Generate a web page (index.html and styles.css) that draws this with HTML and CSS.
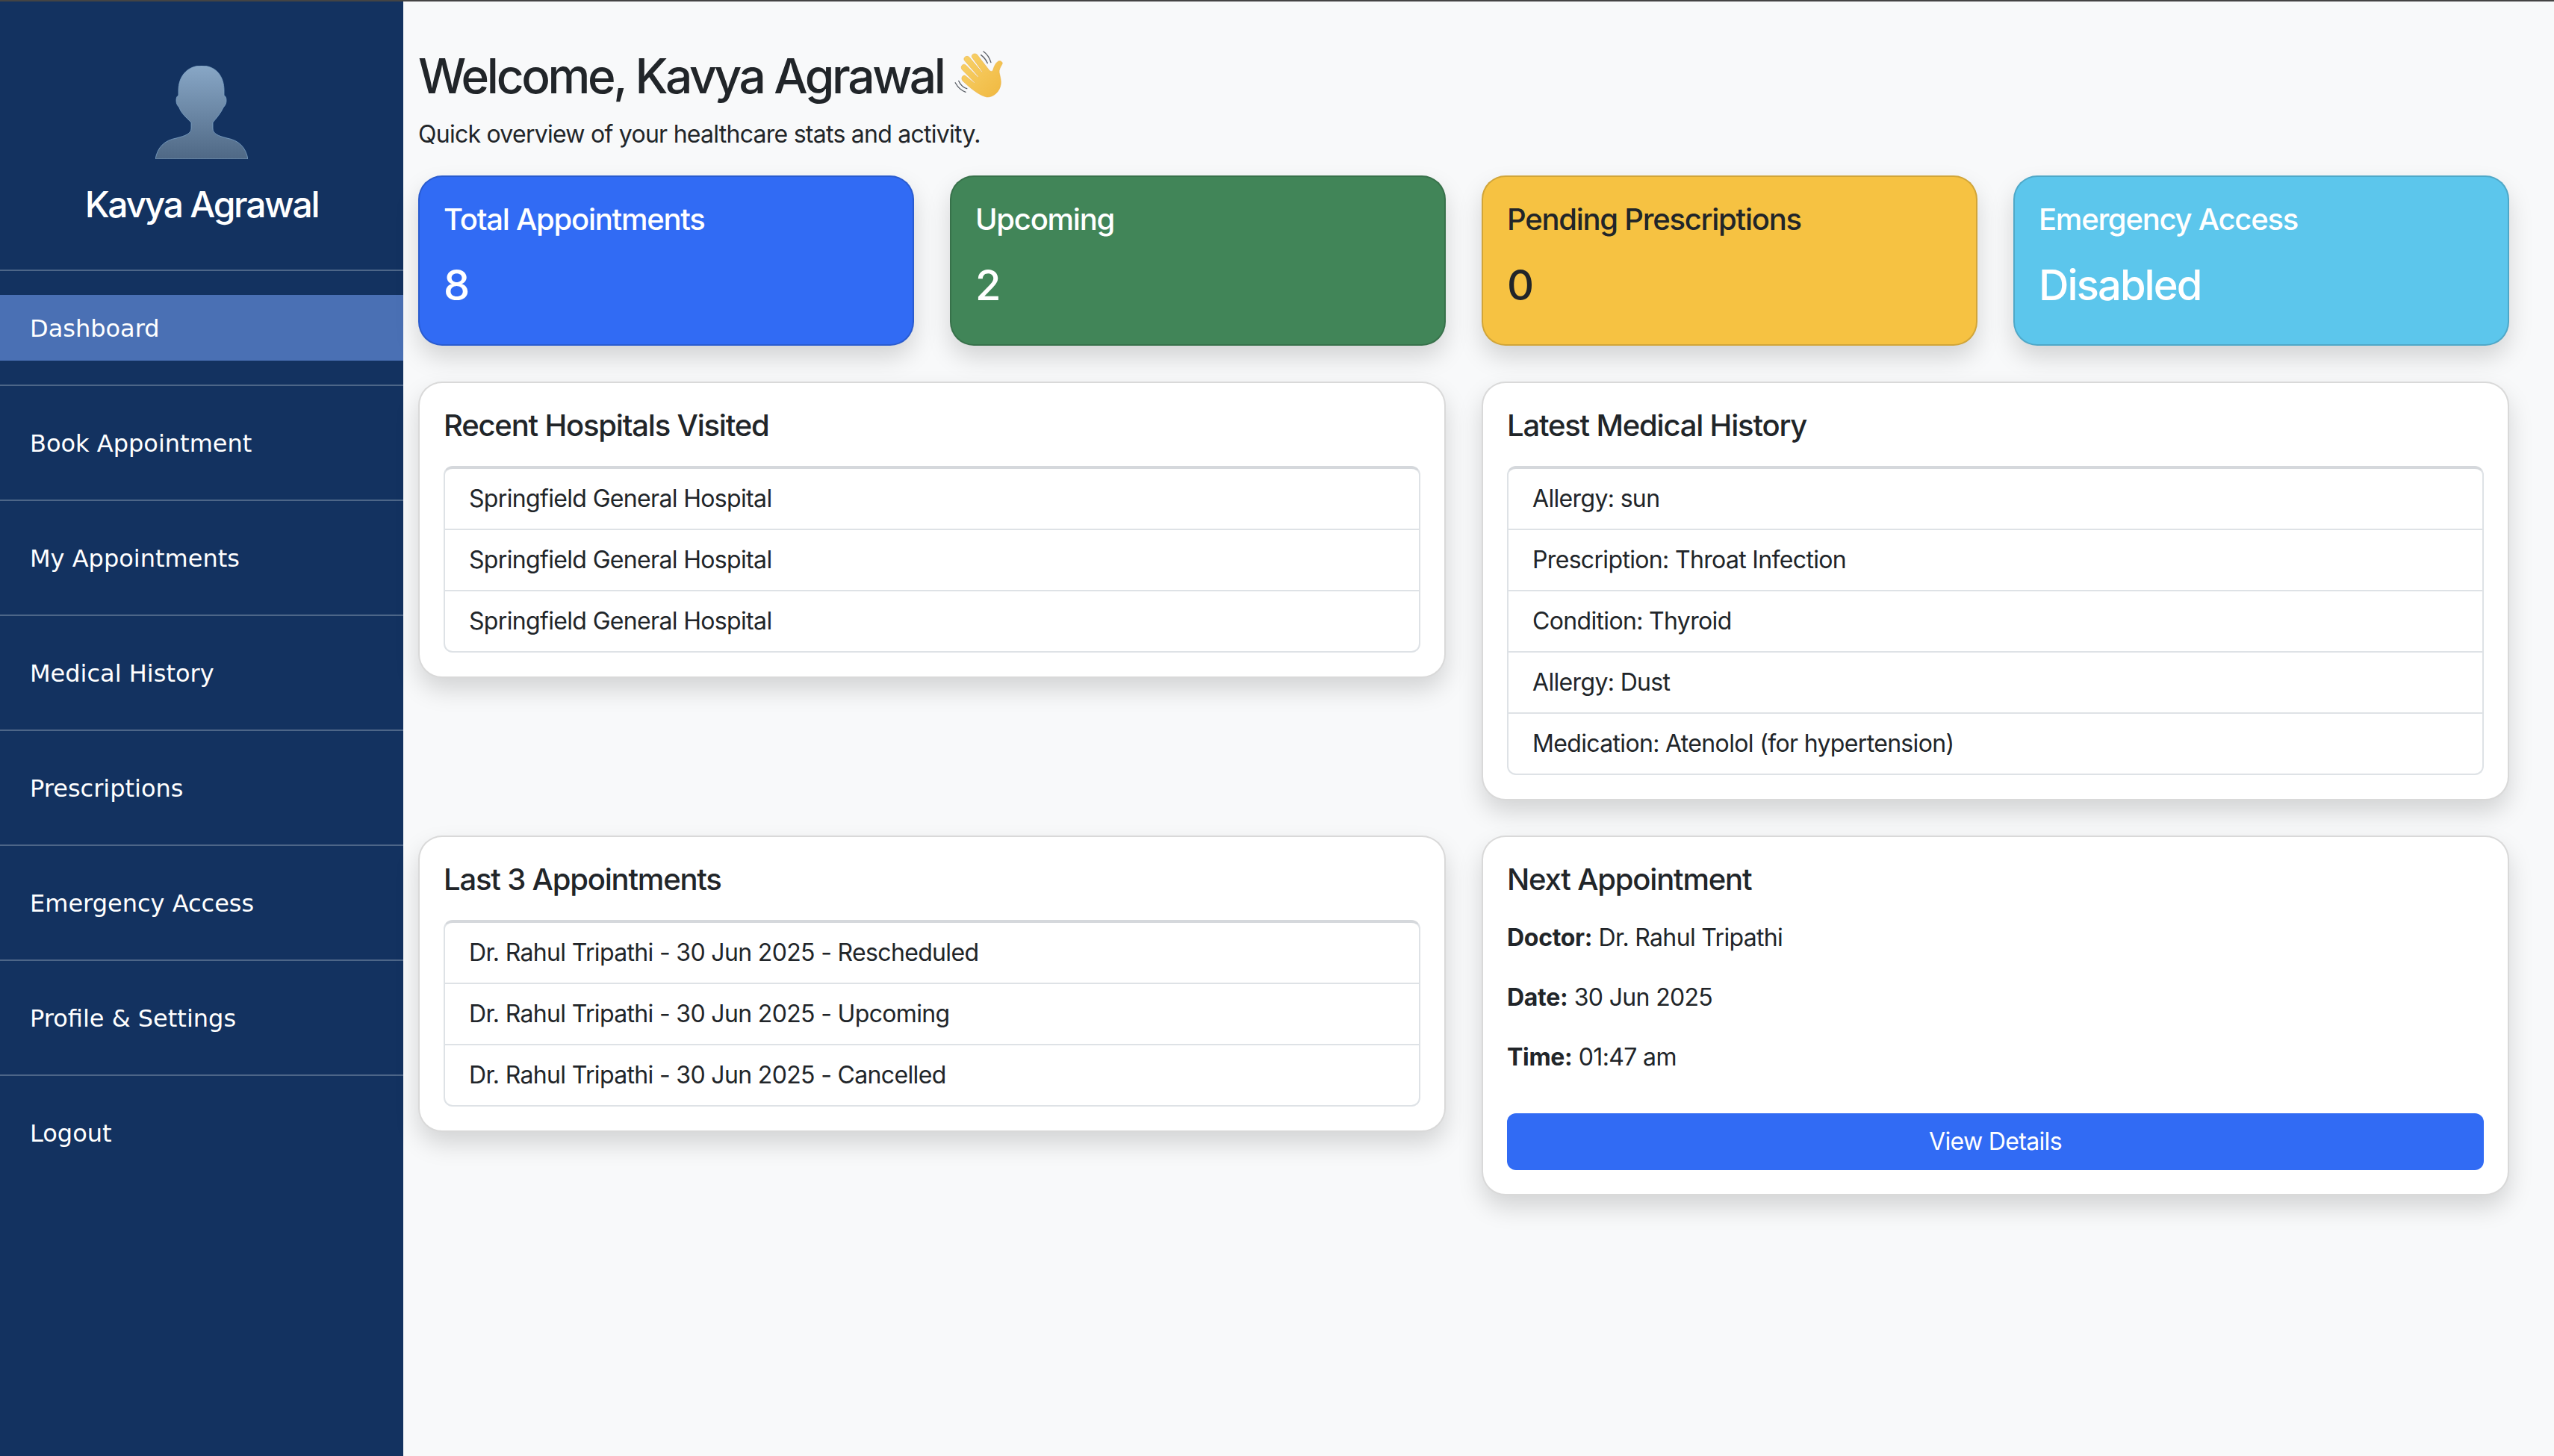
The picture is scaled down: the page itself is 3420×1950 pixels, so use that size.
FILE: index.html
```html
<!DOCTYPE html>
<html lang="en">
<head>
    <meta charset="UTF-8"/>
    <title>Patient Dashboard</title>
    <link rel="stylesheet" href="styles.css">
</head>
<body>
<div class="container">
    <div id="sidebar">
        <div class="profile">
            <svg class="avatar" viewBox="0 0 124 125">
                <defs>
                    <linearGradient id="bust" x1="0" y1="0" x2="0" y2="1">
                        <stop offset="0" stop-color="#88a7c6"/>
                        <stop offset="1" stop-color="#4f6885"/>
                    </linearGradient>
                </defs>
                <path fill="url(#bust)" stroke="#7fa5c8" stroke-width="0.8" d="M62 0C42 0 31 15 31 33V40C28 41 28 45 28 47C28 51 30 54 32 56C34 63 42 70 48 76V84C48 91 40 94 28 97C12 100 3 109 0 125H124C121 109 112 100 96 97C84 94 77 91 77 84V76C82 70 88 63 91 56C93 54 95 51 95 47C95 45 95 41 92 40V33C92 15 82 0 62 0Z"/>
            </svg>
            <h4 class="profile-name">Kavya Agrawal</h4>
        </div>
        <hr class="divider">
        <a class="nav-link active" href="#">Dashboard</a>
        <hr class="divider">
        <a class="nav-link" href="#">Book Appointment</a>
        <hr class="divider">
        <a class="nav-link" href="#">My Appointments</a>
        <hr class="divider">
        <a class="nav-link" href="#">Medical History</a>
        <hr class="divider">
        <a class="nav-link" href="#">Prescriptions</a>
        <hr class="divider">
        <a class="nav-link" href="#">Emergency Access</a>
        <hr class="divider">
        <a class="nav-link" href="#">Profile &amp; Settings</a>
        <hr class="divider">
        <a class="nav-link" href="#">Logout</a>
    </div>
    <div id="main">
        <h2 class="welcome">Welcome, Kavya Agrawal
            <svg class="wave" viewBox="55 83 195 190">
                <defs>
                    <linearGradient id="skin" x1="0" y1="0" x2="1" y2="1">
                        <stop offset="0" stop-color="#f8d26a"/>
                        <stop offset="1" stop-color="#f0b840"/>
                    </linearGradient>
                </defs>
                <path fill="url(#skin)" stroke="#e8ad3c" stroke-width="1.5" d="M185 270C160 265 130 242 110 225L88 205C80 195 86 180 98 183L136 214L137 212L86 160C76 148 88 132 100 140L150 190L152 188L95 122C88 110 104 100 114 108L166 170L168 168L126 110C120 98 136 90 146 98L194 160C198 166 206 168 210 162C214 150 218 134 232 125C242 122 250 128 248 136C240 150 234 160 236 172C240 190 244 205 242 218C238 250 210 272 185 270Z"/>
                <g fill="none" stroke="#5a5f66" stroke-width="4" stroke-linecap="round">
                    <path d="M172 86C185 95 197 113 202 130"/>
                    <path d="M162 100C172 108 183 120 188 133"/>
                    <path d="M58 212C68 230 85 245 100 250"/>
                    <path d="M72 205C80 222 92 232 105 236"/>
                </g>
            </svg>
        </h2>
        <p class="subtitle">Quick overview of your healthcare stats and activity.</p>

        <div class="stats-row">
            <div class="stat-card bg-blue">
                <h5>Total Appointments</h5>
                <h3>8</h3>
            </div>
            <div class="stat-card bg-green">
                <h5>Upcoming</h5>
                <h3>2</h3>
            </div>
            <div class="stat-card bg-yellow">
                <h5>Pending Prescriptions</h5>
                <h3>0</h3>
            </div>
            <div class="stat-card bg-cyan">
                <h5>Emergency Access</h5>
                <h3>Disabled</h3>
            </div>
        </div>

        <div class="panels">
            <div class="panel">
                <h5>Recent Hospitals Visited</h5>
                <ul class="list-group">
                    <li>Springfield General Hospital</li>
                    <li>Springfield General Hospital</li>
                    <li>Springfield General Hospital</li>
                </ul>
            </div>
            <div class="panel">
                <h5>Latest Medical History</h5>
                <ul class="list-group">
                    <li>Allergy: sun</li>
                    <li>Prescription: Throat Infection</li>
                    <li>Condition: Thyroid</li>
                    <li>Allergy: Dust</li>
                    <li>Medication: Atenolol (for hypertension)</li>
                </ul>
            </div>
            <div class="panel">
                <h5>Last 3 Appointments</h5>
                <ul class="list-group">
                    <li>Dr. Rahul Tripathi - 30 Jun 2025 - Rescheduled</li>
                    <li>Dr. Rahul Tripathi - 30 Jun 2025 - Upcoming</li>
                    <li>Dr. Rahul Tripathi - 30 Jun 2025 - Cancelled</li>
                </ul>
            </div>
            <div class="panel">
                <h5>Next Appointment</h5>
                <p class="detail"><strong>Doctor:</strong> Dr. Rahul Tripathi</p>
                <p class="detail"><strong>Date:</strong> 30 Jun 2025</p>
                <p class="detail"><strong>Time:</strong> 01:47 am</p>
                <a class="btn-primary" href="#">View Details</a>
            </div>
        </div>
    </div>
</div>
</body>
</html>
```

FILE: styles.css
```css
* {
    box-sizing: border-box;
}

body {
    margin: 0;
    background-color: #f8f9fa;
    color: #212529;
    font-family: Inter, "Noto Sans", sans-serif;
    font-size: 32px;
    line-height: 48px;
    letter-spacing: -0.66px;
    border-top: 2px solid #444;
}

.container {
    display: flex;
    min-height: 1948px;
}

/* left sidebar */
#sidebar {
    width: 540px;
    flex-shrink: 0;
    background-color: #133260;
    color: #fff;
}

.profile {
    display: flex;
    flex-direction: column;
    align-items: center;
    padding-top: 86px;
}

.avatar {
    width: 124px;
    height: 125px;
}

.profile-name {
    margin: 32px 0 0;
    font-size: 48px;
    font-weight: 500;
    line-height: 58px;
    letter-spacing: -2.3px;
}

.divider {
    margin: 32px 0;
    height: 2px;
    border: none;
    background-color: #4d6688;
}

.profile + .divider {
    margin-top: 58px;
}

.nav-link {
    display: block;
    height: 88px;
    padding: 21px 40px;
    color: #fff;
    text-decoration: none;
    font-family: "DejaVu Sans", sans-serif;
    font-size: 32px;
    letter-spacing: 0;
}

.nav-link.active {
    background-color: #4a70b4;
}

/* main column */
#main {
    flex: 1;
    padding: 58px 60px 0 20px;
}

.welcome {
    display: flex;
    align-items: center;
    gap: 14px;
    margin: 0 0 12px;
    font-size: 64px;
    font-weight: 500;
    line-height: 84px;
    letter-spacing: -3.35px;
}

.wave {
    width: 65px;
    height: 63px;
    margin-top: -5px;
}

.subtitle {
    margin: 0 0 31px;
    letter-spacing: -0.74px;
}

.stats-row {
    display: grid;
    grid-template-columns: repeat(4, 1fr);
    gap: 48px;
    margin-bottom: 48px;
}

.stat-card {
    height: 228px;
    padding: 32px;
    border: 2px solid rgba(0, 0, 0, 0.15);
    border-radius: 32px;
    box-shadow: 0 16px 32px rgba(0, 0, 0, 0.15);
    color: #fff;
}

.stat-card h5 {
    margin: 0 0 29px;
    font-size: 40px;
    font-weight: 500;
    line-height: 50px;
    letter-spacing: -1.25px;
}

.stat-card h3 {
    margin: 0;
    font-size: 56px;
    font-weight: 500;
    line-height: 68px;
    letter-spacing: -1.9px;
}

.bg-blue { background-color: #316bf4; }
.bg-green { background-color: #418558; }
.bg-yellow { background-color: #f6c242; color: #212529; }
.bg-cyan { background-color: #5cc6ec; }

.panels {
    display: grid;
    grid-template-columns: 1fr 1fr;
    gap: 47px 48px;
    align-items: start;
}

.panel {
    padding: 32px;
    background-color: #fff;
    border: 2px solid rgba(0, 0, 0, 0.15);
    border-radius: 32px;
    box-shadow: 0 16px 32px rgba(0, 0, 0, 0.15);
}

.panel h5 {
    margin: 0 0 29px;
    font-size: 40px;
    font-weight: 500;
    line-height: 50px;
    letter-spacing: -1.2px;
}

.list-group {
    margin: 0;
    padding: 0;
    list-style: none;
    border: 2px solid #dee2e6;
    border-top: 4px solid #d5d8dc;
    border-radius: 12px;
}

.list-group li {
    padding: 16px 32px;
    border-bottom: 2px solid #dee2e6;
}

.list-group li:last-child {
    border-bottom: none;
}

.detail {
    margin: 0 0 32px;
}

.detail strong {
    font-weight: 700;
    letter-spacing: -0.3px;
}

.btn-primary {
    display: block;
    height: 76px;
    margin-top: 51px;
    padding: 14px 0;
    border-radius: 12px;
    background-color: #316bf4;
    color: #fff;
    text-align: center;
    text-decoration: none;
}
```
